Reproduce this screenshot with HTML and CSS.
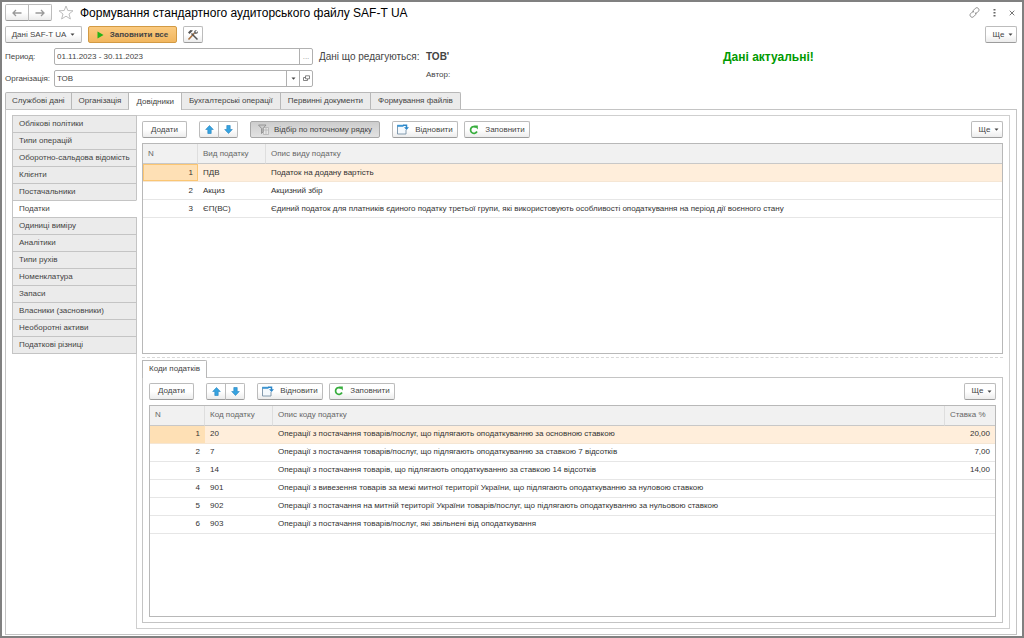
FILE: index.html
```html
<!DOCTYPE html>
<html lang="uk">
<head>
<meta charset="utf-8">
<title>Формування стандартного аудиторського файлу SAF-T UA</title>
<link rel="stylesheet" href="styles.css">
</head>
<body>
<svg class="defs" aria-hidden="true">
  <symbol id="arrow-up" viewBox="0 0 9 9"><path d="M4.500.5 8.300 4.500H6.200V8.500H2.800V4.500H.7z" fill="#36a3e0" stroke="#2383c0" stroke-width=".6"/></symbol>
  <symbol id="arrow-down" viewBox="0 0 9 9"><path d="M4.500 8.500 8.300 4.500H6.200V.5H2.800V4.500H.7z" fill="#36a3e0" stroke="#2383c0" stroke-width=".6"/></symbol>
  <symbol id="caret" viewBox="0 0 5 3"><path d="M.5.5h4L2.500 2.800z" fill="#444"/></symbol>
  <symbol id="restore" viewBox="0 0 12 11"><path d="M6 1.500H.5v8.500h8.500V6" fill="#f4f9fd" stroke="#7790a5" stroke-width=".9"/><path d="M.2.8h6.300v2H.2z" fill="#3f97d3"/><path d="M6 1.200h3.500V4" fill="none" stroke="#2b86c8" stroke-width="1.500"/><path d="M7 3.200h5L9.500 6z" fill="#2b86c8"/></symbol>
  <symbol id="refresh" viewBox="0 0 10 10"><path d="M7 2.200A3.400 3.400 0 1 0 8 6.500" fill="none" stroke="#36ad3c" stroke-width="1.700"/><path d="M5 .5h3.800v4z" fill="#36ad3c"/></symbol>
</svg>
<main class="window">
  <header class="titlebar">
    <div class="group">
      <button class="btn nav" aria-label="Назад"><svg width="10" height="8" viewBox="0 0 10 8"><path d="M9.500 4H1M4 1 1 4l3 3" fill="none" stroke="#999" stroke-width="1.300"/></svg></button>
      <button class="btn nav" aria-label="Вперед"><svg width="10" height="8" viewBox="0 0 10 8"><path d="M.5 4H9M6 1l3 3-3 3" fill="none" stroke="#999" stroke-width="1.300"/></svg></button>
    </div>
    <button class="plain star" aria-label="Вибране"><svg width="16" height="15" viewBox="0 0 16 15"><path d="m8 1 1.800 4.500 5.200.3-4 3.200 1.400 5L8 11.200 3.600 14 5 9 1 5.800l5.200-.3z" fill="#fff" stroke="#bdbdbd"/></svg></button>
    <h1 class="title">Формування стандартного аудиторського файлу SAF-T UA</h1>
    <div class="window-tools">
      <button class="plain" aria-label="Посилання"><svg width="11" height="11" viewBox="0 0 11 11"><g fill="none" stroke="#808080" stroke-width=".9"><path d="M4.600 5.200C3.900 4.500 4 3.700 4.600 3.100L6.400 1.300C7.200.5 8.400.5 9.300 1.400c.9.900.9 2.100.1 2.900L7.900 5.800C7.300 6.400 6.500 6.500 6 6.200"/><path d="M6.400 5.800c.7.700.6 1.500 0 2.100L4.600 9.700c-.8.800-2 .8-2.900-.1-.9-.9-.9-2.100-.1-2.900L3.100 5.200C3.700 4.600 4.500 4.500 5 4.800"/></g></svg></button>
      <button class="plain" aria-label="Меню"><svg width="3" height="9" viewBox="0 0 3 9"><path d="M.5 1h2v1.500h-2zM.5 4h2v1.500h-2zM.5 7h2v1.500h-2z" fill="#666"/></svg></button>
      <button class="plain" aria-label="Закрити"><svg width="6" height="6" viewBox="0 0 6 6"><path d="m.7.7 4.600 4.600M5.300.7.7 5.300" stroke="#777"/></svg></button>
    </div>
  </header>
  <div class="commands">
    <button class="btn wide">Дані SAF-T UA <svg class="caret"><use href="#caret"/></svg></button>
    <button class="btn primary"><svg width="7" height="8" viewBox="0 0 7 8"><path d="M.5.5 6.500 4l-6 3.500z" fill="#25b317"/></svg>Заповнити все</button>
    <button class="btn tool" aria-label="Налаштування"><svg width="12" height="12" viewBox="0 0 12 12"><path d="m1.500 10.500 6-6.500" stroke="#a8703f" stroke-width="1.600"/><path d="m4.500 4.500 6 6" stroke="#555" stroke-width="1.500"/><path d="M1 3.500 3.500 1l2.500.5L3.500 4 2.500 5z" fill="#555"/><path d="M11 2 9.500 3.500 8.500 2.500 10 1C8 .5 6.500 2 7 4l1 1c2 .5 3.500-1 3-3z" fill="#777"/></svg></button>
    <button class="btn more">Ще <svg class="caret"><use href="#caret"/></svg></button>
  </div>
  <div class="form">
    <label for="period">Период:</label>
    <div class="field"><input id="period" type="text" value="01.11.2023 - 30.11.2023"><button class="dots" aria-label="Вибрати період">...</button></div>
    <span class="edited">Дані що редагуються:</span>
    <strong class="company">ТОВ'</strong>
    <strong class="status">Дані актуальні!</strong>
    <label for="org">Організація:</label>
    <div class="field"><select id="org"><option>ТОВ</option></select><span class="drop"><svg class="caret"><use href="#caret"/></svg></span><button aria-label="Відкрити"><svg width="7" height="7" viewBox="0 0 7 7"><path d="M2.500.8h4v3h-4zM2.500 2.500h-2v3h4V4" fill="none" stroke="#666" stroke-width=".8"/></svg></button></div>
    <span class="author">Автор:</span>
  </div>
  <div class="tabs" role="tablist">
    <button class="tab" role="tab">Службові дані</button>
    <button class="tab" role="tab">Організація</button>
    <button class="tab active" role="tab" aria-selected="true">Довідники</button>
    <button class="tab" role="tab">Бухгалтерські операції</button>
    <button class="tab" role="tab">Первинні документи</button>
    <button class="tab" role="tab">Формування файлів</button>
  </div>
  <section class="page">
    <div class="side" role="tablist" aria-orientation="vertical">
      <button class="side-tab" role="tab">Облікові політики</button>
      <button class="side-tab" role="tab">Типи операцій</button>
      <button class="side-tab" role="tab">Оборотно-сальдова відомість</button>
      <button class="side-tab" role="tab">Клієнти</button>
      <button class="side-tab" role="tab">Постачальники</button>
      <button class="side-tab active" role="tab" aria-selected="true">Податки</button>
      <button class="side-tab" role="tab">Одиниці виміру</button>
      <button class="side-tab" role="tab">Аналітики</button>
      <button class="side-tab" role="tab">Типи рухів</button>
      <button class="side-tab" role="tab">Номенклатура</button>
      <button class="side-tab" role="tab">Запаси</button>
      <button class="side-tab" role="tab">Власники (засновники)</button>
      <button class="side-tab" role="tab">Необоротні активи</button>
      <button class="side-tab" role="tab">Податкові різниці</button>
    </div>
    <div class="content">
      <div class="toolbar">
        <button class="btn add">Додати</button>
        <div class="group move">
          <button class="btn" aria-label="Вгору"><svg width="9" height="9"><use href="#arrow-up"/></svg></button>
          <button class="btn" aria-label="Вниз"><svg width="9" height="9"><use href="#arrow-down"/></svg></button>
        </div>
        <button class="btn pressed" aria-pressed="true"><svg width="11" height="11" viewBox="0 0 11 11"><path d="M5.500 3.500h5v7h-5zM8 3.500v7M5.500 6h5" fill="#e6e6e6" stroke="#b4b4b4" stroke-width=".8"/><path d="M.5 1h7.500L5 4.500V8L3.500 9.500v-5z" fill="#ccc" stroke="#888" stroke-width=".8"/></svg>Відбір по поточному рядку</button>
        <button class="btn icon-btn"><svg width="12" height="11"><use href="#restore"/></svg>Відновити</button>
        <button class="btn icon-btn"><svg width="10" height="10"><use href="#refresh"/></svg>Заповнити</button>
        <button class="btn more">Ще <svg class="caret"><use href="#caret"/></svg></button>
      </div>
      <div class="frame upper">
        <table>
          <colgroup><col class="c-num"><col class="c-code"><col></colgroup>
          <thead><tr><th>N</th><th>Вид податку</th><th>Опис виду податку</th></tr></thead>
          <tbody>
            <tr class="selected"><td class="num current">1</td><td>ПДВ</td><td>Податок на додану вартість</td></tr>
            <tr><td class="num">2</td><td>Акциз</td><td>Акцизний збір</td></tr>
            <tr><td class="num">3</td><td>ЄП(ВС)</td><td>Єдиний податок для платників єдиного податку третьої групи, які використовують особливості оподаткування на період дії воєнного стану</td></tr>
          </tbody>
        </table>
      </div>
      <div class="splitter"></div>
      <div class="tabs" role="tablist"><button class="tab active" role="tab" aria-selected="true">Коди податків</button></div>
      <section class="codes">
        <div class="toolbar">
          <button class="btn add">Додати</button>
          <div class="group move">
            <button class="btn" aria-label="Вгору"><svg width="9" height="9"><use href="#arrow-up"/></svg></button>
            <button class="btn" aria-label="Вниз"><svg width="9" height="9"><use href="#arrow-down"/></svg></button>
          </div>
          <button class="btn icon-btn"><svg width="12" height="11"><use href="#restore"/></svg>Відновити</button>
          <button class="btn icon-btn"><svg width="10" height="10"><use href="#refresh"/></svg>Заповнити</button>
          <button class="btn more">Ще <svg class="caret"><use href="#caret"/></svg></button>
        </div>
        <div class="frame">
          <table>
            <colgroup><col class="c-num"><col class="c-code"><col><col class="c-rate"></colgroup>
            <thead><tr><th>N</th><th>Код податку</th><th>Опис коду податку</th><th>Ставка %</th></tr></thead>
            <tbody>
              <tr class="selected"><td class="num current-dim">1</td><td>20</td><td>Операції з постачання товарів/послуг, що підлягають оподаткуванню за основною ставкою</td><td class="num">20,00</td></tr>
              <tr><td class="num">2</td><td>7</td><td>Операції з постачання товарів/послуг, що підлягають оподаткуванню за ставкою 7 відсотків</td><td class="num">7,00</td></tr>
              <tr><td class="num">3</td><td>14</td><td>Операції з постачання товарів, що підлягають оподаткуванню за ставкою 14 відсотків</td><td class="num">14,00</td></tr>
              <tr><td class="num">4</td><td>901</td><td>Операції з вивезення товарів за межі митної території України, що підлягають оподаткуванню за нуловою ставкою</td><td></td></tr>
              <tr><td class="num">5</td><td>902</td><td>Операції з постачання на митній території України товарів/послуг, що підлягають оподаткуванню за нульовою ставкою</td><td></td></tr>
              <tr><td class="num">6</td><td>903</td><td>Операції з постачання товарів/послуг, які звільнені від оподаткування</td><td></td></tr>
            </tbody>
          </table>
        </div>
      </section>
    </div>
  </section>
</main>
</body>
</html>
```
FILE: styles.css
```css
* { box-sizing: border-box; }
body { margin: 0; font: 8px/10px "Liberation Sans", Arial, sans-serif; color: #444; background: #fff; }
button, input, select { font: inherit; color: inherit; margin: 0; }
svg { flex: none; display: block; }
.defs { position: absolute; width: 0; height: 0; }
.caret { width: 5px; height: 3px; }

.window { min-height: 100vh; display: flex; flex-direction: column; border: 2px solid #808080; padding: 2px 5px 1px 3px; }
.titlebar { display: flex; align-items: center; height: 17px; }
.group { display: flex; }
.btn { display: flex; align-items: center; justify-content: center; height: 17px; padding: 0 7px; border: 1px solid #bcbcbc; border-bottom-color: #9c9c9c; border-radius: 2px; background: linear-gradient(#fff 50%, #ececec); white-space: nowrap; }
.group .btn:first-child { border-radius: 2px 0 0 2px; }
.group .btn:last-child { border-radius: 0 2px 2px 0; margin-left: -1px; }
.nav { width: 24px; }
.plain { border: 0; padding: 0; background: none; }
.star { margin: 0 6px; }
.title { margin: 0; font-size: 12px; line-height: 16px; font-weight: 400; color: #000; }
.window-tools { margin-left: auto; display: flex; align-items: center; gap: 13px; padding-right: 2px; }

.commands { display: flex; gap: 6px; margin-top: 5px; }
.wide { width: 77px; gap: 4px; }
.primary { width: 89px; gap: 6px; font-weight: 700; border-color: #d29a44; background: linear-gradient(#fbcb80, #f1b65f); }
.tool { width: 20px; padding: 0; }
.more { width: 32px; gap: 4px; margin-left: auto; padding: 0 0 0 4px; }

.form { display: grid; grid-template-columns: 49px 259px 107px 1fr 294px; grid-template-rows: 17px 17px; row-gap: 5px; align-items: center; margin-top: 5px; }
.field { position: relative; display: flex; height: 17px; border: 1px solid #b0b0b0; border-radius: 2px; }
.field input, .field select { flex: 1; min-width: 0; padding: 0 2px; border: 0; background: none; appearance: none; }
.field button { width: 13px; padding: 0; border: 0; border-left: 1px solid #b0b0b0; background: none; display: grid; place-items: center; }
.field .dots { color: #999; }
.drop { position: absolute; right: 13px; top: 0; bottom: 0; width: 13px; display: grid; place-items: center; border-left: 1px solid #b0b0b0; pointer-events: none; }
.edited { font-size: 10px; padding-left: 6px; white-space: nowrap; }
.company { font-size: 10px; padding-left: 6px; }
.status { font-size: 12px; color: #009a00; }
.author { grid-column: 4; padding-left: 6px; align-self: start; }

.tabs { display: flex; margin-top: 5px; }
.tab { height: 17px; padding: 0 7px; border: 1px solid #b8b8b8; border-bottom: 0; border-left-width: 0; background: #ebebeb; white-space: nowrap; }
.tab:first-child { padding: 0 6px; border-left-width: 1px; border-radius: 2px 0 0 0; }
.tab:last-child { border-radius: 0 2px 0 0; }
.tab.active { position: relative; z-index: 1; height: 18px; margin-bottom: -1px; background: #fff; }
.page { flex: 1; display: flex; padding: 5px 6px; border: 1px solid #c4c4c4; }
.side { flex: none; width: 125px; display: flex; flex-direction: column; z-index: 1; margin-right: -1px; }
.side-tab { height: 17px; padding: 0 6px; border: 1px solid #c4c4c4; border-bottom: 0; background: #ebebeb; text-align: left; white-space: nowrap; }
.side-tab:last-child { height: 18px; border-bottom: 1px solid #c4c4c4; }
.side-tab.active { border-right-color: #fff; background: #fff; }

.content { flex: 1; min-width: 0; display: flex; flex-direction: column; padding: 5px 6px 5px 5px; border: 1px solid #cfcfcf; }
.toolbar { display: flex; margin-bottom: 5px; }
.add { width: 45px; }
.move { margin: 0 12px; }
.move .btn { width: 20px; padding: 0; }
.pressed { width: 130px; gap: 5px; padding: 0; border-color: #a8a8a8; background: linear-gradient(#cdcdcd, #e2e2e2); margin-right: 12px; }
.icon-btn { width: 66px; gap: 6px; padding: 0; margin-right: 6px; }
.toolbar .more { margin-left: auto; }
.frame { flex: 1; border: 1px solid #b8b8b8; }
.upper { flex: 0 1 33vh; }
.splitter { margin-top: 3px; border-top: 1px dashed #d8d8d8; }
.content .tabs { margin-top: 2px; }
.codes { flex: 1; display: flex; flex-direction: column; padding: 5px 6px; border: 1px solid #c4c4c4; }

table { width: 100%; table-layout: fixed; border-collapse: separate; border-spacing: 0; }
.c-num { width: 55px; }
.c-code { width: 68px; }
.c-rate { width: 50px; }
th { height: 20px; padding: 0 5px; border-bottom: 1px solid #c8c8c8; border-right: 1px solid #dedede; background: #f1f1f1; font-weight: 400; color: #666; text-align: left; }
th:last-child { border-right: 0; }
td { height: 18px; padding: 0 5px; border-bottom: 1px solid #e6e6e6; white-space: nowrap; color: #333; }
.num { text-align: right; }
.selected td { background: #ffeedb; border-bottom-color: #f5e6d4; }
.selected .current { background: #fee0b5; box-shadow: inset 0 0 0 1px #fbc673; }
.selected .current-dim { background: #fee0b5; }
```
